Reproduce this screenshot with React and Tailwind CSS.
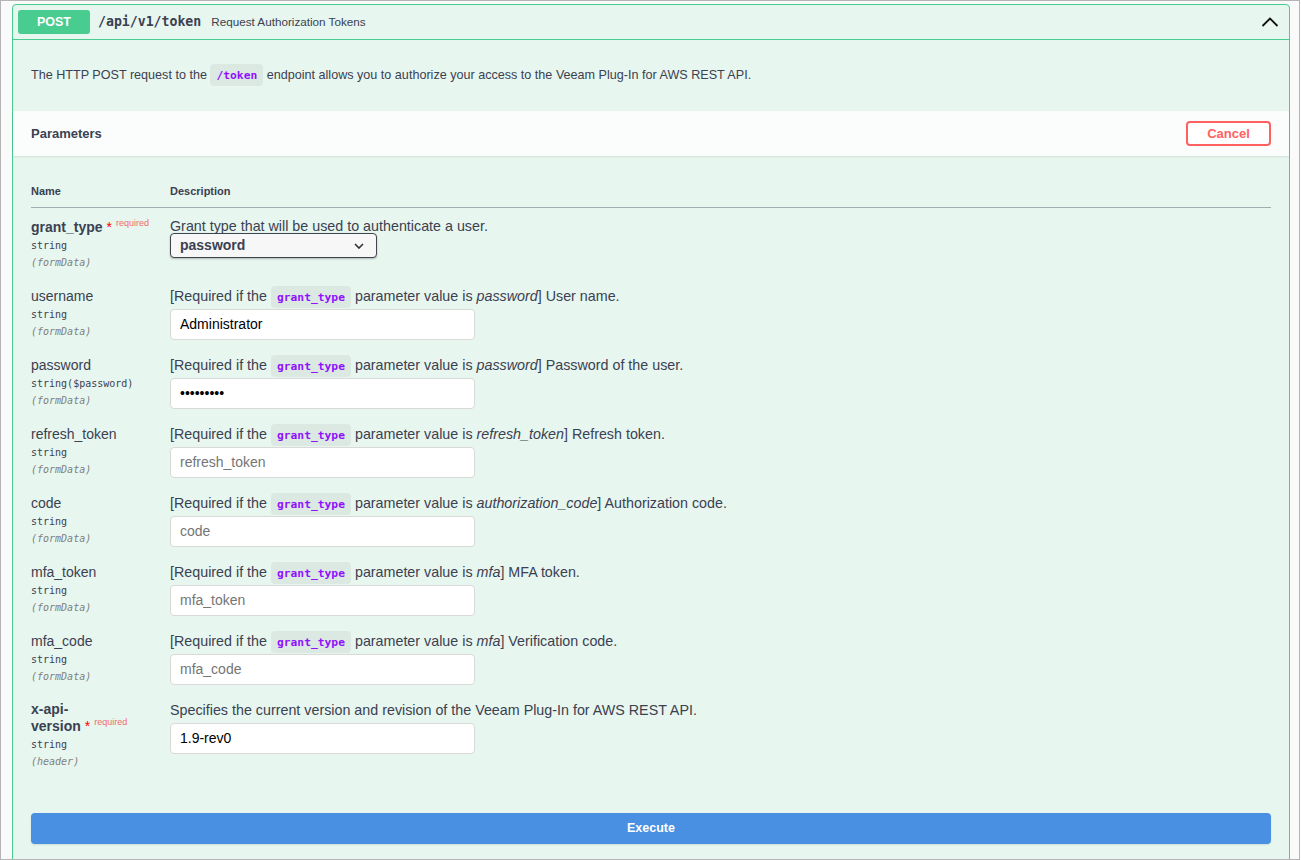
import React from "react";

const sans = { fontFamily: '"Liberation Sans", Arial, sans-serif' };

const params = [
  {
    name: "grant_type",
    required: true,
    type: "string",
    where: "(formData)",
    kind: "select",
    desc: <>Grant type that will be used to authenticate a user.</>,
    value: "password",
  },
  {
    name: "username",
    type: "string",
    where: "(formData)",
    hint: "password",
    rest: "User name.",
    value: "Administrator",
  },
  {
    name: "password",
    type: "string($password)",
    where: "(formData)",
    hint: "password",
    rest: "Password of the user.",
    value: "•••••••••",
  },
  {
    name: "refresh_token",
    type: "string",
    where: "(formData)",
    hint: "refresh_token",
    rest: "Refresh token.",
    placeholder: "refresh_token",
  },
  {
    name: "code",
    type: "string",
    where: "(formData)",
    hint: "authorization_code",
    rest: "Authorization code.",
    placeholder: "code",
  },
  {
    name: "mfa_token",
    type: "string",
    where: "(formData)",
    hint: "mfa",
    rest: "MFA token.",
    placeholder: "mfa_token",
  },
  {
    name: "mfa_code",
    type: "string",
    where: "(formData)",
    hint: "mfa",
    rest: "Verification code.",
    placeholder: "mfa_code",
  },
];

function Code({ children }) {
  return (
    <code className="rounded-[4px] bg-black/5 px-[6px] pt-[5px] pb-[4px] font-['DejaVu_Sans_Mono',monospace] text-[11.3px] font-bold text-[#9012fe]">
      {children}
    </code>
  );
}

function TypeLines({ type, where, tight }) {
  return (
    <>
      <div
        className={
          "font-['DejaVu_Sans_Mono',monospace] text-[10px] leading-[17px] text-[#3b4151] " +
          (tight ? "mt-[-1px]" : "mt-[1px]")
        }
      >
        {type}
      </div>
      <div className="font-['DejaVu_Sans_Mono',monospace] text-[10px] leading-[17px] italic text-[#808080]">
        {where}
      </div>
    </>
  );
}

function Required() {
  return (
    <>
      <span className="font-normal text-[#ff0000]"> *</span>
      <span className="relative top-[-6px] ml-[4px] text-[9px] font-normal text-[#ff0000]/60">
        required
      </span>
    </>
  );
}

function NameCell({ p }) {
  return (
    <div className="w-[139px] shrink-0">
      <div
        className={
          "text-[14px] leading-[18px] whitespace-nowrap text-[#3b4151] " +
          (p.required ? "mb-[-2px] font-bold" : "")
        }
      >
        {p.name}
        {p.required && <Required />}
      </div>
      <TypeLines type={p.type} where={p.where} />
    </div>
  );
}

function TextInput({ value, placeholder }) {
  return (
    <div className="mt-[4px] flex h-[31px] w-[305px] items-center rounded-[4px] border border-[#d9d9d9] bg-white px-[9px] text-[14px]">
      {value ? (
        <span className="text-black">{value}</span>
      ) : (
        <span className="text-[#757575]">{placeholder}</span>
      )}
    </div>
  );
}

function ParamRow({ p }) {
  const isSelect = p.kind === "select";
  return (
    <div className="flex pb-[16px]">
      <NameCell p={p} />
      <div className="flex-1">
        {isSelect ? (
          <>
            <div className="text-[14.3px] leading-[17px] text-[#3b4151]">{p.desc}</div>
            <div className="mt-[-2px] flex h-[25px] w-[207px] items-center justify-between rounded-[4px] border-[1.5px] border-[#41444e] bg-[#f7f7f7] pl-[9px] pr-[12px] shadow-[0_1px_2px_rgba(0,0,0,0.25)]">
              <span className="text-[14px] font-bold text-[#3b4151]">{p.value}</span>
              <svg width="10" height="6" viewBox="0 0 10 6" fill="none">
                <path d="M1 1l4 4 4-4" stroke="#303030" strokeWidth="1.6" />
              </svg>
            </div>
          </>
        ) : (
          <>
            <div className="h-[18px] text-[14.3px] leading-[18px] whitespace-nowrap text-[#3b4151]">
              [Required if the <Code>grant_type</Code> parameter value is{" "}
              <i>{p.hint}</i>] {p.rest}
            </div>
            <TextInput value={p.value} placeholder={p.placeholder} />
          </>
        )}
      </div>
    </div>
  );
}

export default function App() {
  return (
    <div style={sans} className="h-[860px] w-[1301px] overflow-hidden bg-white">
      <div className="h-[860px] w-[1300px] overflow-hidden border border-[#b4b4b4] bg-[#fafafa] pl-[11px] pr-[9px] pt-[3px]">
        <div className="h-[900px] rounded-[4px] border border-[#49cc90] bg-[#e7f6ef]">
          {/* Summary bar */}
          <div className="flex h-[35px] items-center border-b border-[#49cc90] pl-[5px] pr-[10px]">
            <span className="flex h-[24px] w-[72px] items-center justify-center rounded-[3px] bg-[#49cc90] text-[12.5px] font-bold text-white">
              POST
            </span>
            <span className="ml-[8px] font-['DejaVu_Sans_Mono',monospace] text-[13.2px] font-bold text-[#3b4151]">
              /api/v1/token
            </span>
            <span className="ml-[10px] text-[11.7px] text-[#3b4151]">
              Request Authorization Tokens
            </span>
            <svg className="ml-auto" width="18" height="10" viewBox="0 0 18 10" fill="none">
              <path d="M1.5 9L9 1.5 16.5 9" stroke="#111" strokeWidth="1.8" />
            </svg>
          </div>

          {/* Description */}
          <div className="flex h-[71px] items-center px-[18px] text-[12.6px] text-[#3b4151]">
            <span>
              The HTTP POST request to the <Code>/token</Code> endpoint allows you to
              authorize your access to the Veeam Plug-In for AWS REST API.
            </span>
          </div>

          {/* Parameters header */}
          <div className="flex h-[45px] items-center justify-between bg-white/80 px-[18px] shadow-[0_1px_2px_rgba(0,0,0,0.1)]">
            <span className="text-[13px] font-bold text-[#3b4151]">Parameters</span>
            <button className="h-[25px] w-[85px] rounded-[4px] border-2 border-[#ff6060] bg-white text-[13px] font-bold text-[#ff6060]">
              Cancel
            </button>
          </div>

          {/* Table */}
          <div className="px-[18px] pt-[28px]">
            <div className="flex border-b border-[#3b4151]/40 pb-[9px] text-[11px] leading-[14px] font-bold text-[#3b4151]">
              <div className="w-[139px]">Name</div>
              <div>Description</div>
            </div>
            <div className="pt-[10px]">
              {params.map((p) => (
                <ParamRow key={p.name} p={p} />
              ))}
              <div className="flex pb-[16px]">
                <div className="w-[139px] shrink-0">
                  <div className="text-[14px] leading-[17px] font-bold text-[#3b4151]">
                    x-api-
                    <br />
                    version
                    <Required />
                  </div>
                  <TypeLines type="string" where="(header)" tight />
                </div>
                <div className="flex-1">
                  <div className="h-[18px] text-[14.3px] leading-[18px] text-[#3b4151]">
                    Specifies the current version and revision of the Veeam Plug-In for AWS REST API.
                  </div>
                  <TextInput value="1.9-rev0" />
                </div>
              </div>
            </div>
            <button className="mt-[27px] h-[31px] w-full rounded-[4px] bg-[#4990e2] text-[12.5px] font-bold text-white shadow-[0_1px_2px_rgba(0,0,0,0.1)]">
              Execute
            </button>
          </div>
        </div>
      </div>
    </div>
  );
}
